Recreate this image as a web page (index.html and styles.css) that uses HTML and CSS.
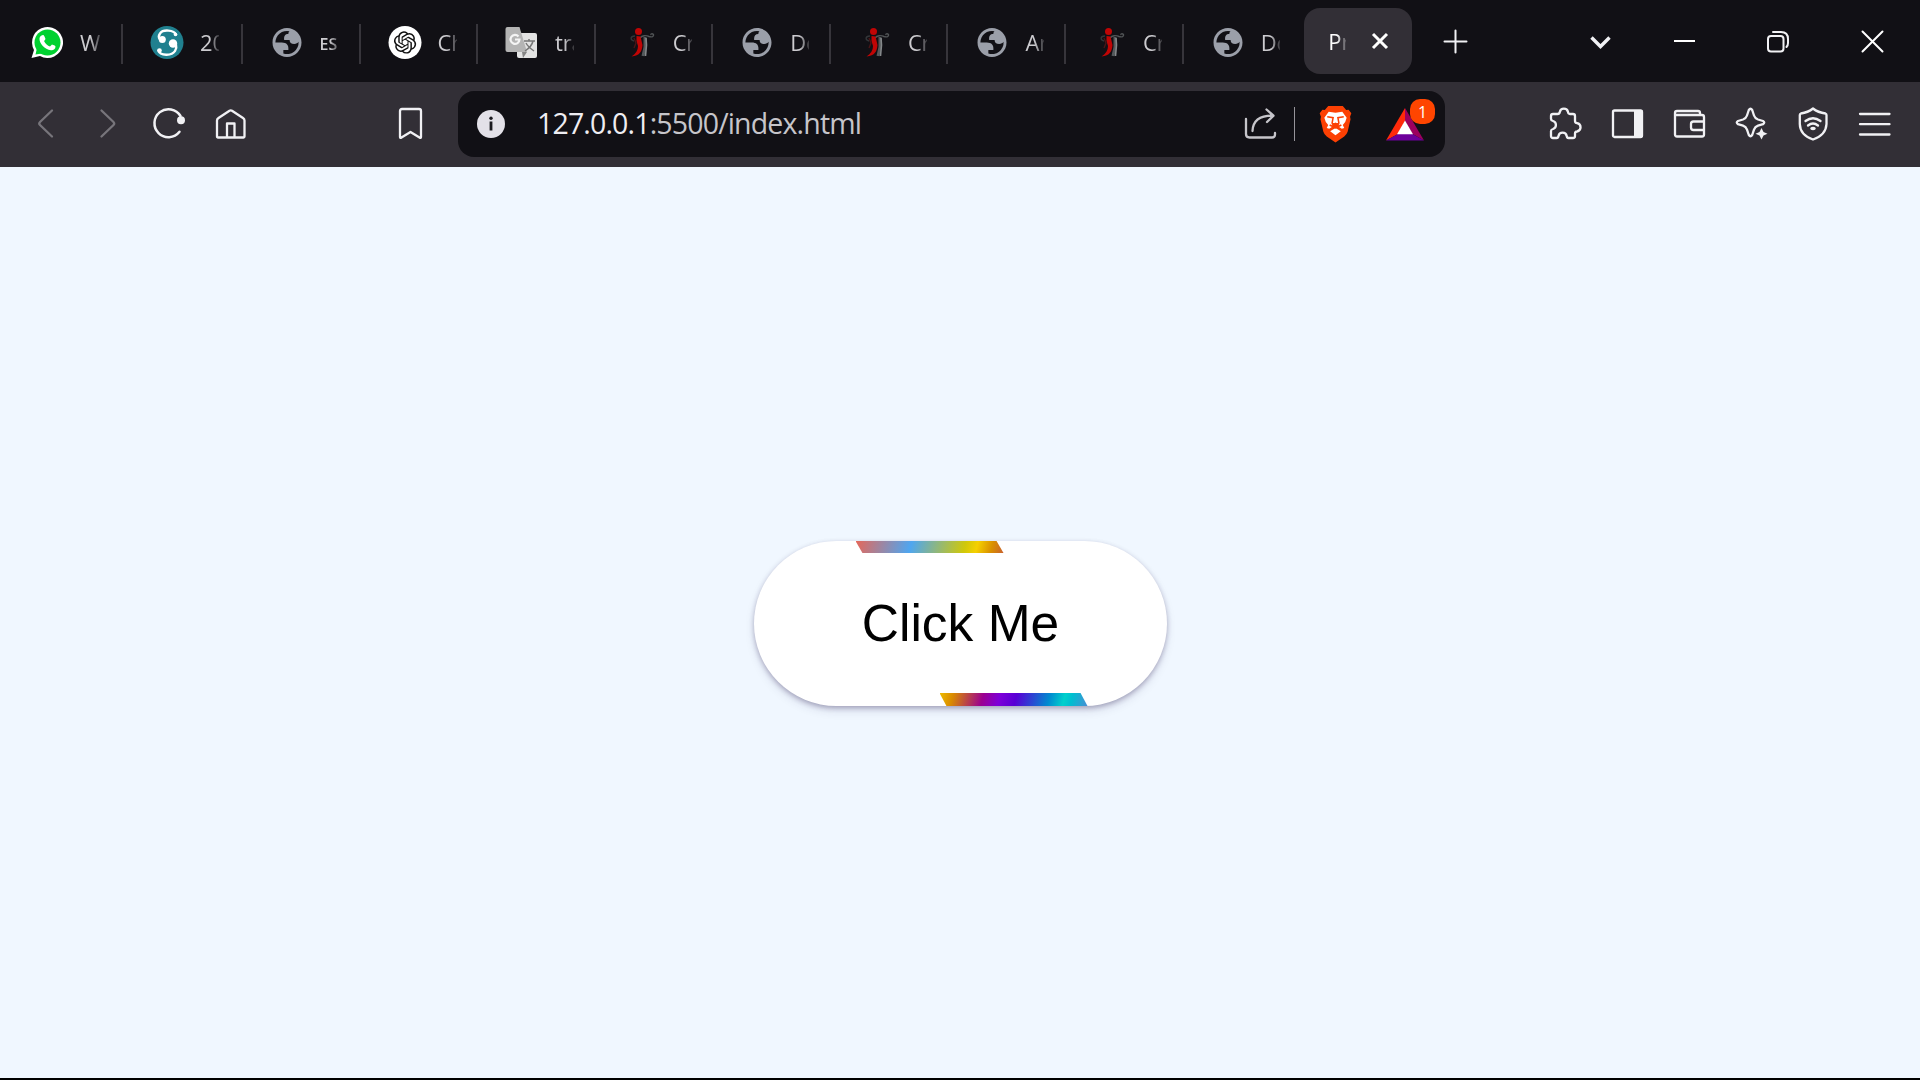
FILE: index.html
```html
<!DOCTYPE html>
<html lang="en">
<head>
<meta charset="utf-8">
<title>Project</title>
<link rel="stylesheet" href="styles.css">
</head>
<body>
<svg class="defs" width="0" height="0">
  <symbol id="globe" viewBox="0 0 34 34">
    <path transform="translate(-.4 .1) scale(1.45)" fill="#9b9fa9" fill-rule="evenodd" d="M12 2C6.480 2 2 6.480 2 12s4.480 10 10 10 10-4.480 10-10S17.520 2 12 2zM4 12h4.400c3.407.022 4.922 1.730 4.543 5.127H9.488v2.470a8.004 8.004 0 0 0 10.498-8.083C19.327 12.504 18.332 13 17 13c-2.137 0-3.206-.916-3.206-2.750h-3.748c-.274-2.728.683-4.092 2.870-4.092 0-.975.327-1.597.811-1.970A8.004 8.004 0 0 0 4 12z"/>
  </symbol>
  <symbol id="figure" viewBox="0 0 34 34">
    <g fill="none" stroke="#505355" stroke-width="1.400"><path d="M17 13C19 10.500 23 10 26 11.500C29 12.500 31 11.500 30.500 9.500C29 8 27.500 9 28 10"/><path d="M11 16C7 15 7 11 12 11" stroke="#333538"/><path d="M22 12V22L20 31" stroke-width="3" stroke="#55585a"/><path d="M23 13L23.500 20L22.500 31" stroke="#85888a" stroke-width="1.600"/></g>
    <circle cx="15.500" cy="6.500" r="3.500" fill="#c00505"/>
    <path d="M13.500 11L17.500 11.500L19.500 20C19 26 17 31 8.500 31.500C13 28.500 15 25 15 21L13.500 16Z" fill="#c00505"/>
    <path d="M11 13L13 18L11 23" fill="none" stroke="#4a1517" stroke-width="1.400"/>
  </symbol>
</svg>

<div class="browser">
  <header class="tabstrip">
    <div class="tabs">
      <div class="tab">
        <svg class="favicon" viewBox="0 0 34 34"><path d="M1.500 33L4 25A15.500 15.500 0 1 1 10 31Z" fill="#fff"/><circle cx="17.500" cy="17.500" r="13" fill="#00d130"/><path d="M5.500 29.500L7 23L12 28.500Z" fill="#00d130"/><path d="M11.500 10.500C13 9.500 14 10 14.500 11.500L15.500 14C15 15 14.500 15.500 14 16C15.500 19 17.500 20.500 20 21.500L22 19.500C23.500 20 25 20.500 25.500 21.500C25.500 24.500 23 25.500 21 25.200C14.500 24.500 9.500 18.500 9.500 14C9.500 12.500 10 11.500 11.500 10.500Z" fill="#fff"/></svg>
        <span class="title">W</span>
      </div>
      <div class="tab">
        <svg class="favicon" viewBox="0 0 34 34"><circle cx="17" cy="17.500" r="16.500" fill="#20808f"/><g fill="none" stroke="#fff" stroke-width="2.400" stroke-linecap="round"><path d="M26 9.500C24 5 13 4 10 8.500C8.500 10.500 8.800 13 10 14.500"/><path d="M8.500 25.500C10 31 22 31 25 26C26.500 23.500 26.500 21.500 26 20"/></g><circle cx="12.300" cy="14.500" r="3.500" fill="#fff"/><circle cx="23" cy="18.500" r="4.200" fill="#fff"/><circle cx="25.500" cy="9.500" r="1.800" fill="#fff"/><circle cx="9.500" cy="25.500" r="2.300" fill="#fff"/></svg>
        <span class="title">20</span>
      </div>
      <div class="tab"><svg class="favicon"><use href="#globe"/></svg><span class="title title-small">ES</span></div>
      <div class="tab">
        <svg class="favicon" viewBox="0 0 34 34"><circle cx="17" cy="17.500" r="16.500" fill="#fff"/><path transform="translate(5.900 6.300) scale(.93)" fill="#111" d="M22.2819 9.8211a5.9847 5.9847 0 0 0-.5157-4.9108 6.0462 6.0462 0 0 0-6.5098-2.9A6.0651 6.0651 0 0 0 4.9807 4.1818a5.9847 5.9847 0 0 0-3.9977 2.9 6.0462 6.0462 0 0 0 .7427 7.0966 5.98 5.98 0 0 0 .511 4.9107 6.051 6.051 0 0 0 6.5146 2.9001A5.9847 5.9847 0 0 0 13.2599 24a6.0557 6.0557 0 0 0 5.7718-4.2058 5.9894 5.9894 0 0 0 3.9977-2.9001 6.0557 6.0557 0 0 0-.7475-7.0729zm-9.022 12.6081a4.4755 4.4755 0 0 1-2.8764-1.0408l.1419-.0804 4.7783-2.7582a.7948.7948 0 0 0 .3927-.6813v-6.7369l2.02 1.1686a.071.071 0 0 1 .038.052v5.5826a4.504 4.504 0 0 1-4.4945 4.4944zm-9.6607-4.1254a4.4708 4.4708 0 0 1-.5346-3.0137l.142.0852 4.783 2.7582a.7712.7712 0 0 0 .7806 0l5.8428-3.3685v2.3324a.0804.0804 0 0 1-.0332.0615L9.74 19.9502a4.4992 4.4992 0 0 1-6.1408-1.6464zM2.3408 7.8956a4.485 4.485 0 0 1 2.3655-1.9728V11.6a.7664.7664 0 0 0 .3879.6765l5.8144 3.3543-2.0201 1.1685a.0757.0757 0 0 1-.071 0l-4.8303-2.7865A4.504 4.504 0 0 1 2.3408 7.872zm16.5963 3.8558L13.1038 8.364 15.1192 7.2a.0757.0757 0 0 1 .071 0l4.8303 2.7913a4.4944 4.4944 0 0 1-.6765 8.1042v-5.6772a.79.79 0 0 0-.407-.667zm2.0107-3.0231l-.142-.0852-4.7735-2.7818a.7759.7759 0 0 0-.7854 0L9.409 9.2297V6.8974a.0662.0662 0 0 1 .0284-.0615l4.8303-2.7866a4.4992 4.4992 0 0 1 6.6802 4.66zM8.3065 12.863l-2.02-1.1638a.0804.0804 0 0 1-.038-.0567V6.0742a4.4992 4.4992 0 0 1 7.3757-3.4537l-.142.0805L8.704 5.459a.7948.7948 0 0 0-.3927.6813zm1.0976-2.3654l2.602-1.4998 2.6069 1.4998v2.9994l-2.5974 1.4997-2.6067-1.4997Z"/></svg>
        <span class="title">Ch</span>
      </div>
      <div class="tab">
        <svg class="favicon" viewBox="0 0 34 34"><rect x="12" y="8" width="20" height="25" rx="2" fill="#e3e3e3"/><path d="M2.500 2H14.500L22 27H2.500Q.500 27 .500 25V4Q.500 2 2.500 2Z" fill="#b4b4b4"/><path d="M17 27H22L18 33Z" fill="#858585"/><path d="M13.500 11.500A4.500 4.500 0 1 0 14.500 14.500H10" fill="none" stroke="#f4f4f4" stroke-width="2.200"/><path d="M19 16H30M24 14V16M28 16C27 21 23 24 20 26M21 18C23 22 26 24 29 26" fill="none" stroke="#777" stroke-width="1.500"/></svg>
        <span class="title">tra</span>
      </div>
      <div class="tab"><svg class="favicon"><use href="#figure"/></svg><span class="title">Cr</span></div>
      <div class="tab"><svg class="favicon"><use href="#globe"/></svg><span class="title">Do</span></div>
      <div class="tab"><svg class="favicon"><use href="#figure"/></svg><span class="title">Cr</span></div>
      <div class="tab"><svg class="favicon"><use href="#globe"/></svg><span class="title">An</span></div>
      <div class="tab"><svg class="favicon"><use href="#figure"/></svg><span class="title">Cr</span></div>
      <div class="tab"><svg class="favicon"><use href="#globe"/></svg><span class="title">Do</span></div>
    </div>
    <div class="tab-active">
      <span class="title">Pr</span>
      <svg width="18" height="18" viewBox="0 0 18 18"><path d="M2 2L16 16M16 2L2 16" stroke="#fff" stroke-width="3"/></svg>
    </div>
    <svg class="icon new-tab" viewBox="0 0 36 36"><path d="M7.500 18.500H29.500M18.500 7.500V29.500" stroke-width="2"/></svg>
    <svg class="icon tab-search" viewBox="0 0 36 36"><path d="M8.500 14.500L17.500 23.500L26.500 14.500" stroke-width="3.400"/></svg>
    <svg class="icon minimize" viewBox="0 0 36 36"><path d="M7 18H28" stroke="#fff" stroke-width="2" stroke-linecap="butt"/></svg>
    <svg class="icon restore" viewBox="0 0 36 36"><rect x="8" y="13" width="15.500" height="15.500" rx="3"/><path d="M13 9H21Q28 9 28 16V20Q28 22.500 26.500 24"/></svg>
    <svg class="icon close" viewBox="0 0 36 36"><path d="M7.500 8.500L27.500 28.500M27.500 8.500L7.500 28.500" stroke="#fff"/></svg>
  </header>

  <nav class="toolbar">
    <div class="group nav-group">
      <svg class="icon dim" viewBox="0 0 36 36"><path d="M24 4.500L12 16Q10.500 17.500 12 19L24 30.500"/></svg>
      <svg class="icon dim" viewBox="0 0 36 36"><path d="M11.500 4.500L23.500 16Q25 17.500 23.500 19L11.500 30.500"/></svg>
      <svg class="icon" viewBox="0 0 36 36"><path d="M27.500 25.800A14 14 0 1 1 28.500 10" stroke-width="2.500"/><circle cx="29" cy="14.200" r="4" fill="#f1f1f4" stroke="none"/></svg>
      <svg class="icon" viewBox="0 0 36 36"><path d="M3 14.500Q3 13 4.500 12L15.500 4.800Q16.800 4 18 4.800L29 12Q30.500 13 30.500 14.500V30.500Q30.500 31.500 29.500 31.500H4Q3 31.500 3 30.500ZM13 31V17.500H20.500V31"/></svg>
      <svg class="icon bookmark" viewBox="0 0 36 36"><path d="M10 3H27Q29 3 29 5V31Q29 32.500 27.500 31.500L18.500 26L9.500 31.500Q8 32.500 8 31V5Q8 3 10 3Z"/></svg>
    </div>

    <div class="address">
      <svg class="info" viewBox="0 0 28 28"><circle cx="14" cy="14" r="14" fill="#e3e1e8"/><rect x="12.600" y="11.500" width="2.800" height="9" fill="#1b1a1f"/><circle cx="14" cy="8.200" r="1.700" fill="#1b1a1f"/></svg>
      <span class="url"><span class="host">127.0.0.1</span>:5500/index.html</span>
      <svg class="icon share" viewBox="0 0 36 36"><path d="M3 13V28Q3 31.500 6.500 31.500H29Q32 31.500 32 28.500V27M9.500 25C10 15 16 9.700 29 9.700M23.500 3.500L30.500 9.700L24 16"/></svg>
      <span class="divider"></span>
      <svg class="brave" viewBox="0 0 34 38"><path d="M9.500 .500H24.500L28 4.500L30.500 4.200L33.300 8L32 11.500L32.500 14L29.500 27Q28.500 30 26 32L17 38L8 32Q5.500 30 4.500 27L1.500 14L2 11.500L.700 8L3.500 4.200L6 4.500Z" fill="#fc4003"/><path d="M10 6.500L17 7.500L24 6.500L28.500 12.500L27 17L24.500 20L26 23L23.500 24L20 21.500L21 19.500L17 17.500L13 19.500L14 21.500L10.500 24L8 23L9.500 20L7 17L5.500 12.500Z" fill="#fff"/><path d="M17 23L22.500 26.500L17 30.500L11.500 26.500Z" fill="#fff"/><path d="M8.500 11.500L14.500 12.500L13.500 18L17 19.700L20.500 18L19.500 12.500L25.500 11.500M17 19V23M11 20L17 23L23 20" fill="none" stroke="#fc4003" stroke-width="1.600"/></svg>
      <span class="rewards">
        <svg width="38" height="33" viewBox="0 0 38 33"><path d="M19 0L0 32.500L12 26L19 13Z" fill="#ff2a0a"/><path d="M19 0L38 32.500L26.500 26L19 13Z" fill="#9c005e"/><path d="M0 32.500H38L26.500 26H12Z" fill="#6d009b"/><path d="M19 12.500L27 26.300H11Z" fill="#fff"/></svg>
        <span class="badge">1</span>
      </span>
    </div>

    <div class="group actions">
      <svg class="icon" viewBox="0 0 36 36"><path d="M5 8H9.500Q11.500 8 11.800 6A4.200 4.200 0 0 1 20 6Q20.200 8 22 8H25Q27 8 27 10V15Q27 17 29 17.200A4.200 4.200 0 0 1 29 25.500Q27 25.700 27 27.500V30Q27 32 25 32H20.500Q19 32 18.700 30A4.200 4.200 0 0 0 10.500 30Q10.200 32 8.500 32H5Q3 32 3 30V25Q3 23.500 5 23A4.200 4.200 0 0 0 5 15Q3 14.500 3 13V10Q3 8 5 8Z"/></svg>
      <svg class="icon" viewBox="0 0 36 36"><rect x="3" y="4.500" width="29" height="26.500" rx="1.500"/><path d="M24 4H31Q33 4 33 6V29.500Q33 31.500 31 31.500H24Z" fill="#f1f1f4" stroke="none"/></svg>
      <svg class="icon" viewBox="0 0 36 36"><path d="M3 9V7Q3 5 5 5H26Q28 5 28 7V9M3 9H30Q32 9 32 11V28.500Q32 30.500 30 30.500H5Q3 30.500 3 28.500ZM32 15.500H21.500Q19 15.500 19 18V21.500Q19 24 21.500 24H32"/></svg>
      <svg class="icon" viewBox="0 0 36 36"><path d="M14.800 4Q16.500 1.500 18.200 4L20 9.500Q21 12.500 24 13.500L29 15Q31.500 16.500 29 18.200L24 19.700Q21 20.700 20 23.700L18.200 29Q16.500 31.500 14.800 29L13 23.700Q12 20.700 9 19.700L4 18.200Q1.500 16.500 4 15L9 13.500Q12 12.500 13 9.500Z"/><path d="M27.500 22L29.500 26L33.500 27.800L29.500 29.500L27.500 33.500L25.500 29.500L21.500 27.800L25.500 26Z" fill="#f1f1f4" stroke="none"/></svg>
      <svg class="icon" viewBox="0 0 36 36"><path d="M17 2.500Q22 6.500 29.500 7.500Q30.500 7.800 30.500 9V18Q30 29 17 33.500Q4 29 3.800 18V9Q3.800 7.800 4.800 7.500Q12 6.500 17 2.500Z"/><path d="M9.500 15Q17 9.500 24.500 15M12 19.500Q17 15.500 22 19.500"/><ellipse cx="17" cy="22.500" rx="2.800" ry="1.800" fill="#f1f1f4" stroke="none"/></svg>
      <svg class="icon" viewBox="0 0 36 36"><path d="M2 8H31.500M2 18.200H31.500M2 28.500H31.500"/></svg>
    </div>
  </nav>

  <main class="page">
    <button class="btn"><span class="strip strip-top"></span>Click Me<span class="strip strip-bottom"></span></button>
  </main>
</div>
</body>
</html>
```
FILE: styles.css
```css
* { box-sizing: border-box; }
body { margin: 0; background: #000; font-family: "Open Sans", "Noto Sans", sans-serif; }
.defs { position: absolute; }
.browser { display: flex; flex-direction: column; height: 1080px; overflow: hidden; border-bottom: 2px solid #000; }

.tabstrip { display: flex; align-items: center; height: 82px; padding-left: 2px; background: #111015; }
.tabs { display: grid; grid-template-columns: 121px 119.5px 118px repeat(7, 117.6px) 116.7px; height: 34px; }
.tab { display: flex; align-items: center; padding: 0 0 4px 27px; border-right: 2px solid #37353b; }
.tab:first-child { padding-left: 28px; }
.tab:last-child { border-right-color: transparent; }
.favicon { width: 34px; height: 34px; flex: none; margin-right: 16px; }
.title {
  width: 19px; overflow: hidden; white-space: nowrap; font-size: 22px; line-height: 32px;
  color: #cccbcf; letter-spacing: -0.2px;
  -webkit-mask-image: linear-gradient(90deg, #000 50%, rgba(0, 0, 0, .2)); mask-image: linear-gradient(90deg, #000 50%, rgba(0, 0, 0, .2));
}
.tab:first-child .title { width: 21px; }
.title-small { width: 20px; font-size: 16px; font-weight: 600; letter-spacing: 0; padding-top: 4px; }
.tab-active {
  display: flex; align-items: center; width: 108px; height: 66px; margin-left: 4px; padding-left: 24px; gap: 25px;
  border-radius: 16px; background: #322f36;
}
.tab-active .title { width: 18px; color: #fff; font-weight: 500; }

.icon { width: 36px; height: 36px; flex: none; fill: none; stroke: #f1f1f4; stroke-width: 2.3; stroke-linecap: round; stroke-linejoin: round; }
.dim { stroke: #77757b; }
.new-tab { margin-left: 25px; }
.tab-search { margin-left: 110px; stroke-linecap: butt; stroke-linejoin: miter; }
.minimize { margin-left: 48px; }
.restore { margin-left: 57px; stroke-width: 2; }
.close { margin-left: 59px; stroke-width: 2; }

.toolbar { display: flex; align-items: center; height: 85px; padding: 0 26px 1px 28px; background: #322f36; }
.group { display: flex; gap: 26px; }
.bookmark { margin-left: 116px; }
.address {
  display: flex; align-items: center; width: 987px; height: 66px; margin: 0 103px 0 30px; padding-left: 19px;
  border-radius: 16px; background: #111015;
}
.info { width: 28px; height: 28px; }
.url { width: 706px; margin-left: 32px; padding-bottom: 2px; font-size: 28.500px; letter-spacing: -0.84px; line-height: 40px; color: #c6c5ca; white-space: nowrap; }
.host { color: #eeedf2; }
.share { stroke: #c6c5ca; }
.divider { width: 1px; height: 34px; margin-left: 15px; background: #96949a; }
.brave { width: 33px; height: 38px; margin-left: 24px; }
.rewards { position: relative; height: 33px; margin-left: 34px; }
.rewards svg { display: block; }
.badge {
  position: absolute; left: 24px; top: -9px; width: 25px; height: 25px; border-radius: 10px;
  background: #ff4500; color: #fff; font-size: 16px; line-height: 26px; text-align: center;
}

.page { display: flex; flex: 1; align-items: flex-start; justify-content: center; padding-top: 374px; background: #f0f7ff; }
.btn {
  position: relative; width: 413px; height: 165px; padding: 0 0 0 1px; border: 0; border-radius: 82.5px; background: #fff; color: #000;
  font: 51.5px/165px "Liberation Sans", Arial, sans-serif;
  box-shadow: 0 2px 5px rgba(45, 35, 85, .3), 0 5px 12px -3px rgba(45, 35, 85, .22);
}
.strip { position: absolute; clip-path: polygon(0 0, 95.300% 0, 100% 100%, 4.700% 100%); }
.strip-top {
  left: 102px; top: 0; width: 148px; height: 12px;
  background: linear-gradient(105deg, #e5685a 0%, #4fa6f0 37%, #d0c80a 73%, #f5d000 81%, #d98f00 91%, #c85f30 100%);
}
.strip-bottom {
  left: 186px; bottom: 0; width: 148px; height: 13px;
  background: linear-gradient(105deg, #edbb00 0%, #d98a00 9%, #9b0090 29%, #7e00d8 40%, #5800d5 51%, #008ad0 73%, #00d0cc 83%, #00bed0 88%, #4b8cd5 100%);
}
```
